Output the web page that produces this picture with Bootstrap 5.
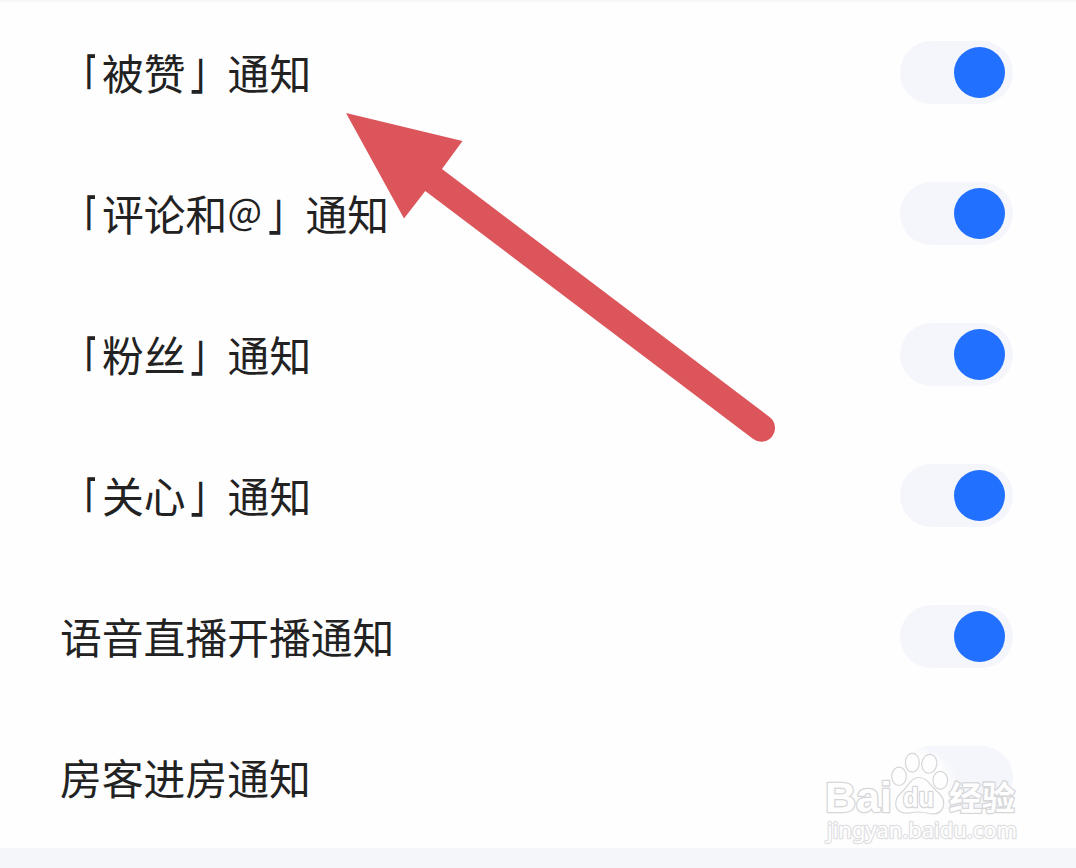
<!DOCTYPE html>
<html lang="zh-CN">
<head>
  <meta charset="UTF-8">
  <title>通知设置</title>
  <meta name="viewport" content="width=device-width, initial-scale=1.0">
  <link
    rel="stylesheet"
    href="https://cdn.jsdelivr.net/npm/bootstrap@5.3.0/dist/css/bootstrap.min.css">
  <style>
    body {
      background-color: #f4f6fa;
      font-family: 'Noto Sans CJK SC', sans-serif;
      color: #222;
      height: 868px;
      overflow: hidden;
    }
    .notice-list {
      border-top: 2px solid #f7f7f8;
      background-color: #fefefe;
    }
    .notice-row {
      height: 141px;
      padding: 0 63px 0 60px;
    }
    .notice-label {
      display: flex;
      font-size: 41.8px;
      line-height: 60px;
      height: 61px;
    }
    /* Corner brackets with short arms and long stems */
    .quote-open,
    .quote-close {
      width: 42px;
      font-size: 42px;
    }
    .quote-open {
      clip-path: inset(0 7px 0 0);
      transform-origin: 50% 12px;
      transform: translateY(1px) scaleY(1.26);
    }
    .quote-close {
      clip-path: inset(0 0 0 4px);
      transform-origin: 50% 52px;
      transform: translateX(2px) scaleY(1.26);
    }
    .at-sign {
      width: 36px;
      font-size: 36.5px;
      font-weight: 400;
      transform: translateY(-3px);
    }
    .toggle-track {
      width: 113px;
      height: 63px;
      padding: 0 8px;
      border-radius: 32px;
      background-color: #f4f6fb;
    }
    .toggle-knob {
      width: 51px;
      height: 51px;
      background-color: #2170ff;
    }
    .overlay {
      pointer-events: none;
    }
  </style>
</head>
<body>
<div class="position-relative">
  <div class="notice-list">
    <div class="notice-row d-flex align-items-center justify-content-between">
      <div class="notice-label"><span class="quote-open">「</span>被赞<span class="quote-close">」</span>通知</div>
      <div class="toggle-track d-flex align-items-center justify-content-end"><span class="toggle-knob rounded-circle"></span></div>
    </div>
    <div class="notice-row d-flex align-items-center justify-content-between">
      <div class="notice-label"><span class="quote-open">「</span>评论和<span class="at-sign">@</span><span class="quote-close">」</span>通知</div>
      <div class="toggle-track d-flex align-items-center justify-content-end"><span class="toggle-knob rounded-circle"></span></div>
    </div>
    <div class="notice-row d-flex align-items-center justify-content-between">
      <div class="notice-label"><span class="quote-open">「</span>粉丝<span class="quote-close">」</span>通知</div>
      <div class="toggle-track d-flex align-items-center justify-content-end"><span class="toggle-knob rounded-circle"></span></div>
    </div>
    <div class="notice-row d-flex align-items-center justify-content-between">
      <div class="notice-label"><span class="quote-open">「</span>关心<span class="quote-close">」</span>通知</div>
      <div class="toggle-track d-flex align-items-center justify-content-end"><span class="toggle-knob rounded-circle"></span></div>
    </div>
    <div class="notice-row d-flex align-items-center justify-content-between">
      <div class="notice-label">语音直播开播通知</div>
      <div class="toggle-track d-flex align-items-center justify-content-end"><span class="toggle-knob rounded-circle"></span></div>
    </div>
    <div class="notice-row d-flex align-items-center justify-content-between">
      <div class="notice-label">房客进房通知</div>
      <div class="toggle-track"></div>
    </div>
  </div>

  <!-- Arrow and watermark, drawn over the list -->
  <svg class="overlay position-absolute top-0 start-0" width="1076" height="868" viewBox="0 0 1076 868">
    <defs>
      <radialGradient id="halo">
        <stop offset="0.75" stop-color="#fefefe"/>
        <stop offset="1" stop-color="#fefefe" stop-opacity="0"/>
      </radialGradient>
    </defs>
    <path fill="#db555b" d="M346 113 462.5 141 442 169 769.5 417A13.6 13.6 0 0 1 753.2 439L425.3 191 404 218.5Z"/>

    <ellipse cx="914" cy="788" rx="44" ry="43" fill="url(#halo)"/>
    <g fill="#fefefe" stroke="#d6d6d8" stroke-width="1.2">
      <ellipse cx="899" cy="776.3" rx="7.3" ry="9.2"/>
      <ellipse cx="912.3" cy="762.7" rx="7" ry="9.5"/>
      <ellipse cx="929.3" cy="763.8" rx="7.5" ry="9.5" transform="rotate(8 929.3 763.8)"/>
      <ellipse cx="940.3" cy="780.3" rx="7.3" ry="9"/>
      <path d="M919 777.5C927 777.5 930 785 935 789.5C942 795 945 800 943.5 806C941.5 813 936 815 929 813.5C922 811.5 916 811.5 909 813C902 814 896 811 895.7 804C895.5 797 900 794 904 790C909 785 911 777.5 919 777.5Z"/>
    </g>
    <g fill="#fefefe" stroke="#d6d6d9" stroke-width="2.6" stroke-linejoin="round" paint-order="stroke">
      <text x="825" y="811.5" font-family="Liberation Sans, sans-serif" font-size="42" font-weight="700" textLength="67" lengthAdjust="spacingAndGlyphs">Bai</text>
      <text x="903" y="807" font-family="Liberation Sans, sans-serif" font-size="27" font-weight="700" textLength="31" lengthAdjust="spacingAndGlyphs">du</text>
      <text x="949" y="809.5" font-family="Noto Sans CJK SC, sans-serif" font-size="33" font-weight="700" textLength="66" lengthAdjust="spacingAndGlyphs">经验</text>
    </g>
    <text x="827" y="838" font-family="Noto Sans, sans-serif" font-size="21" fill="#fefefe" stroke="#e0e0e3" stroke-width="2.4" stroke-linejoin="round" paint-order="stroke" textLength="190" lengthAdjust="spacingAndGlyphs">jingyan.baidu.com</text>
  </svg>
</div>

<script src="https://cdn.jsdelivr.net/npm/bootstrap@5.3.0/dist/js/bootstrap.bundle.min.js"></script>
</body>
</html>
